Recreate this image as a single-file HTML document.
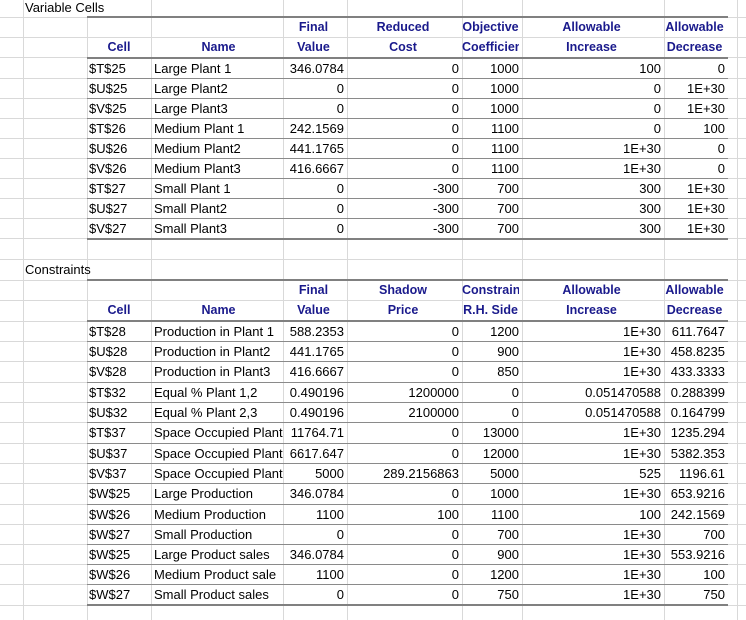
<!DOCTYPE html><html><head><style>
body{margin:0;width:746px;height:620px;overflow:hidden;background:#fff;font-family:"Liberation Sans",Arial,sans-serif;font-size:13px;color:#000;position:relative}
.h{position:absolute;left:0;width:746px;height:1px;background:#d9d9d9}
.v{position:absolute;top:0;height:620px;width:1px;background:#d9d9d9}
.r{position:absolute;left:0;width:746px;height:20px}
.r span{position:absolute;top:0;height:20px;line-height:21px;white-space:nowrap;overflow:hidden}
.a{left:89px;width:60px}.b{left:154px;width:129px}
.c{left:283px;width:61px;text-align:right}.d{left:347px;width:112px;text-align:right}
.e{left:462px;width:57px;text-align:right}.f{left:522px;width:139px;text-align:right}
.g{left:664px;width:61px;text-align:right}
.hd span{font-weight:bold;color:#1a1a8c;text-align:center;font-size:12.5px}
.hd .a,.hd .b{text-align:center}
.tk{position:absolute;left:87px;width:641px;height:2px;background:#808080}
.tn{position:absolute;left:87px;width:641px;height:1px;background:#8a8a8a}
.t{position:absolute;left:25px;height:17px;line-height:17px}
</style></head><body>
<div class="v" style="left:23px"></div><div class="v" style="left:87px"></div><div class="v" style="left:151px"></div><div class="v" style="left:283px"></div><div class="v" style="left:347px"></div><div class="v" style="left:462px"></div><div class="v" style="left:522px"></div><div class="v" style="left:664px"></div><div class="v" style="left:737px"></div>
<div class="h" style="top:17px"></div><div class="h" style="top:37px"></div><div class="h" style="top:57px"></div><div class="h" style="top:78px"></div><div class="h" style="top:98px"></div><div class="h" style="top:118px"></div><div class="h" style="top:138px"></div><div class="h" style="top:158px"></div><div class="h" style="top:178px"></div><div class="h" style="top:198px"></div><div class="h" style="top:218px"></div><div class="h" style="top:238px"></div><div class="h" style="top:259px"></div><div class="h" style="top:280px"></div><div class="h" style="top:300px"></div><div class="h" style="top:321px"></div><div class="h" style="top:341px"></div><div class="h" style="top:361px"></div><div class="h" style="top:382px"></div><div class="h" style="top:402px"></div><div class="h" style="top:422px"></div><div class="h" style="top:443px"></div><div class="h" style="top:463px"></div><div class="h" style="top:483px"></div><div class="h" style="top:504px"></div><div class="h" style="top:524px"></div><div class="h" style="top:544px"></div><div class="h" style="top:564px"></div><div class="h" style="top:584px"></div><div class="h" style="top:605px"></div>
<div class="t" style="top:-1px;background:#fff;width:126px">Variable Cells</div>
<div class="tk" style="top:16px"></div><div class="tk" style="top:57px"></div>
<div class="tn" style="top:78px"></div><div class="tn" style="top:98px"></div><div class="tn" style="top:118px"></div><div class="tn" style="top:138px"></div><div class="tn" style="top:158px"></div><div class="tn" style="top:178px"></div><div class="tn" style="top:198px"></div><div class="tn" style="top:218px"></div>
<div class="tk" style="top:238px"></div>
<div class="r hd" style="top:17px"><span class="c">Final</span><span class="d" style="text-align:center">Reduced</span><span class="e" style="text-align:center">Objective</span><span class="f" style="text-align:center">Allowable</span><span class="g" style="text-align:center">Allowable</span></div>
<div class="r hd" style="top:37px"><span class="a">Cell</span><span class="b">Name</span><span class="c">Value</span><span class="d" style="text-align:center">Cost</span><span class="e" style="text-align:center">Coefficien</span><span class="f" style="text-align:center">Increase</span><span class="g" style="text-align:center">Decrease</span></div>
<div class="r" style="top:58px"><span class="a">$T$25</span><span class="b">Large Plant 1</span><span class="c">346.0784</span><span class="d">0</span><span class="e">1000</span><span class="f">100</span><span class="g">0</span></div>
<div class="r" style="top:78px"><span class="a">$U$25</span><span class="b">Large Plant2</span><span class="c">0</span><span class="d">0</span><span class="e">1000</span><span class="f">0</span><span class="g">1E+30</span></div>
<div class="r" style="top:98px"><span class="a">$V$25</span><span class="b">Large Plant3</span><span class="c">0</span><span class="d">0</span><span class="e">1000</span><span class="f">0</span><span class="g">1E+30</span></div>
<div class="r" style="top:118px"><span class="a">$T$26</span><span class="b">Medium Plant 1</span><span class="c">242.1569</span><span class="d">0</span><span class="e">1100</span><span class="f">0</span><span class="g">100</span></div>
<div class="r" style="top:138px"><span class="a">$U$26</span><span class="b">Medium Plant2</span><span class="c">441.1765</span><span class="d">0</span><span class="e">1100</span><span class="f">1E+30</span><span class="g">0</span></div>
<div class="r" style="top:158px"><span class="a">$V$26</span><span class="b">Medium Plant3</span><span class="c">416.6667</span><span class="d">0</span><span class="e">1100</span><span class="f">1E+30</span><span class="g">0</span></div>
<div class="r" style="top:178px"><span class="a">$T$27</span><span class="b">Small Plant 1</span><span class="c">0</span><span class="d">-300</span><span class="e">700</span><span class="f">300</span><span class="g">1E+30</span></div>
<div class="r" style="top:198px"><span class="a">$U$27</span><span class="b">Small Plant2</span><span class="c">0</span><span class="d">-300</span><span class="e">700</span><span class="f">300</span><span class="g">1E+30</span></div>
<div class="r" style="top:218px"><span class="a">$V$27</span><span class="b">Small Plant3</span><span class="c">0</span><span class="d">-300</span><span class="e">700</span><span class="f">300</span><span class="g">1E+30</span></div>
<div class="t" style="top:261px;background:#fff;width:62px">Constraints</div>
<div class="tk" style="top:279px"></div><div class="tk" style="top:320px"></div>
<div class="tn" style="top:341px"></div><div class="tn" style="top:361px"></div><div class="tn" style="top:382px"></div><div class="tn" style="top:402px"></div><div class="tn" style="top:422px"></div><div class="tn" style="top:443px"></div><div class="tn" style="top:463px"></div><div class="tn" style="top:483px"></div><div class="tn" style="top:504px"></div><div class="tn" style="top:524px"></div><div class="tn" style="top:544px"></div><div class="tn" style="top:564px"></div><div class="tn" style="top:584px"></div>
<div class="tk" style="top:604px"></div>
<div class="r hd" style="top:280px"><span class="c">Final</span><span class="d" style="text-align:center">Shadow</span><span class="e" style="text-align:center">Constraint</span><span class="f" style="text-align:center">Allowable</span><span class="g" style="text-align:center">Allowable</span></div>
<div class="r hd" style="top:300px"><span class="a">Cell</span><span class="b">Name</span><span class="c">Value</span><span class="d" style="text-align:center">Price</span><span class="e" style="text-align:center">R.H. Side</span><span class="f" style="text-align:center">Increase</span><span class="g" style="text-align:center">Decrease</span></div>
<div class="r" style="top:321px"><span class="a">$T$28</span><span class="b">Production in Plant 1</span><span class="c">588.2353</span><span class="d">0</span><span class="e">1200</span><span class="f">1E+30</span><span class="g">611.7647</span></div>
<div class="r" style="top:341px"><span class="a">$U$28</span><span class="b">Production in Plant2</span><span class="c">441.1765</span><span class="d">0</span><span class="e">900</span><span class="f">1E+30</span><span class="g">458.8235</span></div>
<div class="r" style="top:361px"><span class="a">$V$28</span><span class="b">Production in Plant3</span><span class="c">416.6667</span><span class="d">0</span><span class="e">850</span><span class="f">1E+30</span><span class="g">433.3333</span></div>
<div class="r" style="top:382px"><span class="a">$T$32</span><span class="b">Equal % Plant 1,2</span><span class="c">0.490196</span><span class="d">1200000</span><span class="e">0</span><span class="f">0.051470588</span><span class="g">0.288399</span></div>
<div class="r" style="top:402px"><span class="a">$U$32</span><span class="b">Equal % Plant 2,3</span><span class="c">0.490196</span><span class="d">2100000</span><span class="e">0</span><span class="f">0.051470588</span><span class="g">0.164799</span></div>
<div class="r" style="top:422px"><span class="a">$T$37</span><span class="b">Space Occupied Plant</span><span class="c">11764.71</span><span class="d">0</span><span class="e">13000</span><span class="f">1E+30</span><span class="g">1235.294</span></div>
<div class="r" style="top:443px"><span class="a">$U$37</span><span class="b">Space Occupied Plant</span><span class="c">6617.647</span><span class="d">0</span><span class="e">12000</span><span class="f">1E+30</span><span class="g">5382.353</span></div>
<div class="r" style="top:463px"><span class="a">$V$37</span><span class="b">Space Occupied Plant</span><span class="c">5000</span><span class="d">289.2156863</span><span class="e">5000</span><span class="f">525</span><span class="g">1196.61</span></div>
<div class="r" style="top:483px"><span class="a">$W$25</span><span class="b">Large Production</span><span class="c">346.0784</span><span class="d">0</span><span class="e">1000</span><span class="f">1E+30</span><span class="g">653.9216</span></div>
<div class="r" style="top:504px"><span class="a">$W$26</span><span class="b">Medium Production</span><span class="c">1100</span><span class="d">100</span><span class="e">1100</span><span class="f">100</span><span class="g">242.1569</span></div>
<div class="r" style="top:524px"><span class="a">$W$27</span><span class="b">Small Production</span><span class="c">0</span><span class="d">0</span><span class="e">700</span><span class="f">1E+30</span><span class="g">700</span></div>
<div class="r" style="top:544px"><span class="a">$W$25</span><span class="b">Large Product sales</span><span class="c">346.0784</span><span class="d">0</span><span class="e">900</span><span class="f">1E+30</span><span class="g">553.9216</span></div>
<div class="r" style="top:564px"><span class="a">$W$26</span><span class="b">Medium Product sale</span><span class="c">1100</span><span class="d">0</span><span class="e">1200</span><span class="f">1E+30</span><span class="g">100</span></div>
<div class="r" style="top:584px"><span class="a">$W$27</span><span class="b">Small Product sales</span><span class="c">0</span><span class="d">0</span><span class="e">750</span><span class="f">1E+30</span><span class="g">750</span></div>
</body></html>
